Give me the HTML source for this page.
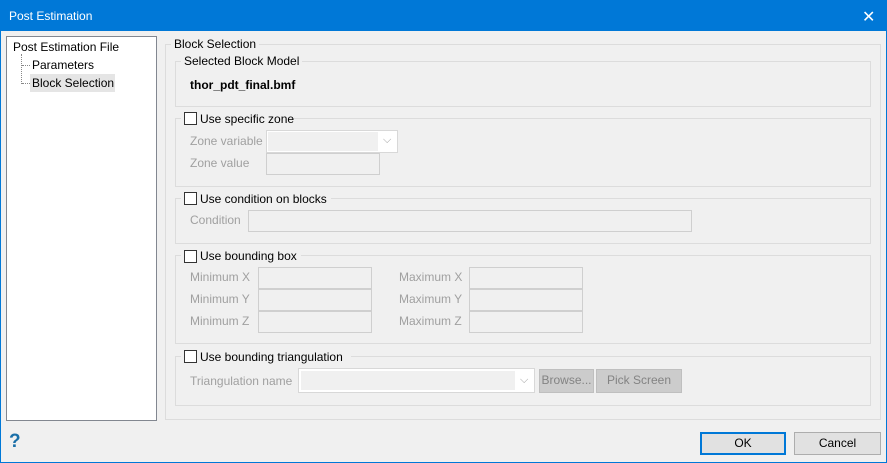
<!DOCTYPE html><html><head><style>
*{box-sizing:border-box}
body{margin:0;width:887px;height:463px;overflow:hidden;font-family:"Liberation Sans",sans-serif;font-size:12px;background:#f0f0f0;position:relative}
.a{position:absolute}
.win{left:0;top:0;width:887px;height:463px;border:1px solid #0078d7}
.title{left:0;top:0;width:887px;height:31px;background:#0078d7;color:#fff;font-size:12px;padding:9px 0 0 9px}
.grp{border:1px solid #dcdcdc}
.lbl{background:#f0f0f0;padding:0 3px;color:#000}
.cb{width:13px;height:13px;border:1px solid #333;background:#fff}
.dis{color:#a0a0a0}
.tb{border:1px solid #cfcfcf;background:#f0f0f0}
.btn{border:1px solid #adadad;background:#e1e1e1;text-align:center;line-height:21px}
</style></head><body>
<div class="a win"></div>
<div class="a title">Post Estimation</div>
<div class="a" style="left:862px;top:7px;color:#fff;font-size:16px;font-weight:lighter">✕</div>
<div class="a" style="left:6px;top:36px;width:151px;height:385px;background:#fff;border:1px solid #828790"></div>
<div class="a" style="left:13px;top:40px">Post Estimation File</div>
<div class="a" style="left:21px;top:54px;height:30px;border-left:1px dotted #888"></div>
<div class="a" style="left:22px;top:65px;width:8px;border-top:1px dotted #888"></div>
<div class="a" style="left:22px;top:83px;width:8px;border-top:1px dotted #888"></div>
<div class="a" style="left:32px;top:58px">Parameters</div>
<div class="a" style="left:30px;top:74px;width:85px;height:18px;background:#e5e5e5"></div>
<div class="a" style="left:32px;top:76px">Block Selection</div>

<div class="a grp" style="left:165px;top:44px;width:716px;height:376px"></div>
<div class="a lbl" style="left:171px;top:37px">Block Selection</div>

<div class="a grp" style="left:175px;top:61px;width:696px;height:46px"></div>
<div class="a lbl" style="left:181px;top:54px">Selected Block Model</div>
<div class="a" style="left:190px;top:78px;font-weight:bold">thor_pdt_final.bmf</div>

<div class="a grp" style="left:175px;top:118px;width:696px;height:69px"></div>
<div class="a lbl" style="left:181px;top:112px;width:110px;height:14px"></div>
<div class="a cb" style="left:184px;top:112px"></div>
<div class="a" style="left:200px;top:112px">Use specific zone</div>
<div class="a dis" style="left:190px;top:134px">Zone variable</div>
<div class="a tb" style="left:266px;top:130px;width:132px;height:23px;background:#fff;border-color:#d8d8d8"></div>
<div class="a" style="left:268px;top:132px;width:110px;height:19px;background:#f0f0f0"></div>
<div class="a dis" style="left:383px;top:134px;font-size:11px">⌵</div>
<div class="a dis" style="left:190px;top:156px">Zone value</div>
<div class="a tb" style="left:266px;top:153px;width:114px;height:22px"></div>

<div class="a grp" style="left:175px;top:198px;width:696px;height:46px"></div>
<div class="a lbl" style="left:181px;top:192px;width:150px;height:14px"></div>
<div class="a cb" style="left:184px;top:192px"></div>
<div class="a" style="left:200px;top:192px">Use condition on blocks</div>
<div class="a dis" style="left:190px;top:213px">Condition</div>
<div class="a tb" style="left:248px;top:210px;width:444px;height:22px"></div>

<div class="a grp" style="left:175px;top:255px;width:696px;height:89px"></div>
<div class="a lbl" style="left:181px;top:249px;width:120px;height:14px"></div>
<div class="a cb" style="left:184px;top:250px"></div>
<div class="a" style="left:200px;top:249px">Use bounding box</div>
<div class="a dis" style="left:190px;top:270px">Minimum X</div>
<div class="a dis" style="left:190px;top:292px">Minimum Y</div>
<div class="a dis" style="left:190px;top:314px">Minimum Z</div>
<div class="a tb" style="left:258px;top:267px;width:114px;height:22px"></div>
<div class="a tb" style="left:258px;top:289px;width:114px;height:22px"></div>
<div class="a tb" style="left:258px;top:311px;width:114px;height:22px"></div>
<div class="a dis" style="left:399px;top:270px">Maximum X</div>
<div class="a dis" style="left:399px;top:292px">Maximum Y</div>
<div class="a dis" style="left:399px;top:314px">Maximum Z</div>
<div class="a tb" style="left:469px;top:267px;width:114px;height:22px"></div>
<div class="a tb" style="left:469px;top:289px;width:114px;height:22px"></div>
<div class="a tb" style="left:469px;top:311px;width:114px;height:22px"></div>

<div class="a grp" style="left:175px;top:356px;width:696px;height:50px"></div>
<div class="a lbl" style="left:181px;top:350px;width:170px;height:14px"></div>
<div class="a cb" style="left:184px;top:350px"></div>
<div class="a" style="left:200px;top:350px">Use bounding triangulation</div>
<div class="a dis" style="left:190px;top:374px">Triangulation name</div>
<div class="a tb" style="left:298px;top:368px;width:237px;height:25px;background:#fff;border-color:#d8d8d8"></div>
<div class="a" style="left:301px;top:371px;width:214px;height:19px;background:#f0f0f0"></div>
<div class="a dis" style="left:520px;top:374px;font-size:11px">⌵</div>
<div class="a btn dis" style="left:539px;top:369px;width:55px;height:24px;background:#ccc;border-color:#bfbfbf;color:#838383">Browse...</div>
<div class="a btn dis" style="left:596px;top:369px;width:86px;height:24px;background:#ccc;border-color:#bfbfbf;color:#838383">Pick Screen</div>

<div class="a" style="left:9px;top:431px;color:#1a6fa8;font-weight:bold;font-size:19px">?</div>
<div class="a btn" style="left:700px;top:432px;width:86px;height:23px;border:2px solid #0078d7;line-height:19px">OK</div>
<div class="a btn" style="left:794px;top:432px;width:87px;height:23px">Cancel</div>
</body></html>
